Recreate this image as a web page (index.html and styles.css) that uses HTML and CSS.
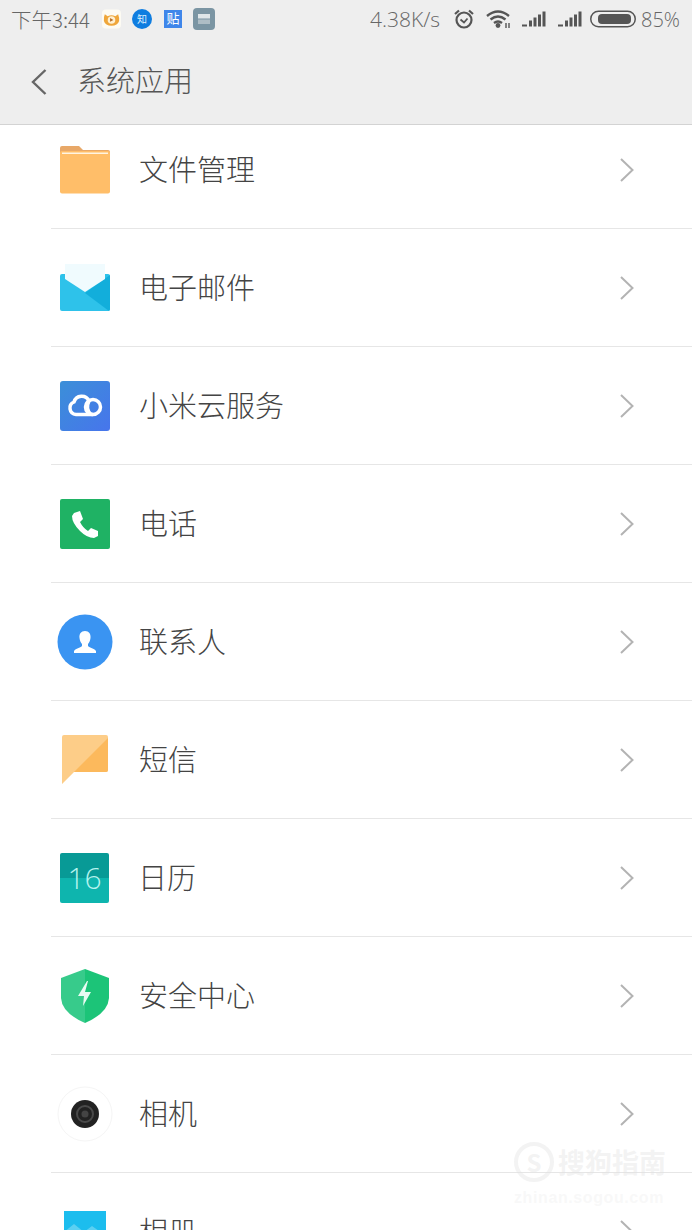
FILE: index.html
```html
<!DOCTYPE html>
<html lang="zh-CN">
<head>
    <meta charset="UTF-8">
    <title>系统应用</title>
    <link rel="stylesheet" href="styles.css">
</head>
<body>
    <header class="top">
        <div class="status">
            <div class="status-left">
                <span class="time">下午3:44</span>
                <svg class="note n-cat" viewBox="0 0 20 20"><rect width="20" height="20" rx="4" fill="#fdfbf3"/><path d="M3 5l3 2q4-2 8 0l3-2q1.500 4 1 7-1.500 5-8 5T2 12Q1.500 8 3 5z" fill="#efa63a"/><circle cx="10" cy="11" r="4" fill="#fff0d0"/><path d="M8.500 9l3.500 2-3.500 2z" fill="#b9702a"/></svg>
                <span class="note n-zhi">知</span>
                <span class="note n-tie">贴</span>
                <svg class="note n-book" viewBox="0 0 22 22"><rect width="22" height="22" rx="4" fill="#7b95a3"/><rect x="5" y="6" width="12" height="4.500" fill="#dfe6e9"/><rect x="5" y="11.500" width="12" height="4.500" fill="#aebdc5"/></svg>
            </div>
            <div class="status-right">
                <span class="speed">4.38K/s</span>
                <svg class="s-alarm" viewBox="0 0 22 22" fill="none" stroke="#555" stroke-width="2.200"><circle cx="11" cy="12" r="7.500"/><path d="M7.500 11.500l3.500 3 3.500-4" stroke-width="1.800"/><path d="M2 6l4-3.500M20 6l-4-3.500"/></svg>
                <svg class="s-wifi" viewBox="0 0 26 20" fill="none" stroke="#555" stroke-width="2.400"><path d="M1 7q11-9 22 0M4.500 10.500q7.500-6 15 0M8 14q4-3 8 0"/><circle cx="12" cy="16.500" r="2.400" fill="#555" stroke="none"/><path d="M20 14v5M23 14v5" stroke-width="1.400"/></svg>
                <svg class="s-signal" viewBox="0 0 24 16" fill="#555"><rect x="0" y="13.500" width="5" height="2"/><rect x="7" y="9.500" width="3" height="6"/><rect x="11.500" y="6.500" width="3" height="9"/><rect x="16" y="3.500" width="3" height="12"/><rect x="20.500" y="0.500" width="3" height="15"/></svg>
                <svg class="s-signal" viewBox="0 0 24 16" fill="#555"><rect x="0" y="13.500" width="5" height="2"/><rect x="7" y="9.500" width="3" height="6"/><rect x="11.500" y="6.500" width="3" height="9"/><rect x="16" y="3.500" width="3" height="12"/><rect x="20.500" y="0.500" width="3" height="15"/></svg>
                <svg class="s-batt" viewBox="0 0 46 18"><rect x=".75" y="1.250" width="44.500" height="15.500" rx="7.750" fill="none" stroke="#555" stroke-width="1.500"/><rect x="8" y="4" width="33" height="10" rx="4" fill="#555"/></svg>
                <span class="batt-text">85%</span>
            </div>
        </div>
        <div class="title-bar">
            <svg class="back" viewBox="0 0 18 28" fill="none" stroke="#666" stroke-width="2.400"><path d="M15.500 2L3 14l12.500 12"/></svg>
            <h1 class="title">系统应用</h1>
        </div>
    </header>

    <ul class="list">
        <li class="row">
            <svg class="icon" viewBox="0 0 60 60"><path d="M5 8q0-2 2-2h17l4 4h25q2 0 2 2v4H5z" fill="#e8a868"/><rect x="5" y="11" width="50" height="42.500" rx="2" fill="#ffbe69"/><rect x="7" y="12.500" width="46" height="1.500" fill="#fff4e2"/></svg>
            <span class="name">文件管理</span>
            <svg class="chev" viewBox="0 0 16 26" fill="none" stroke="#b3b3b3" stroke-width="2"><path d="M2 2l11.500 11L2 24"/></svg>
        </li>
        <li class="row">
            <svg class="icon" viewBox="0 0 60 60"><path d="M5 18q0-2 2-2h46q2 0 2 2v33q0 2-2 2H7q-2 0-2-2z" fill="#2ec2ea"/><path d="M55 17v34q0 1-1 2L30 35z" fill="#12aedb"/><path d="M10 6h40v15L30 34 10 21z" fill="#f0fbfe"/></svg>
            <span class="name">电子邮件</span>
            <svg class="chev" viewBox="0 0 16 26" fill="none" stroke="#b3b3b3" stroke-width="2"><path d="M2 2l11.500 11L2 24"/></svg>
        </li>
        <li class="row">
            <svg class="icon" viewBox="0 0 60 60"><defs><linearGradient id="cloud" x1="0" y1="0" x2="1" y2="1"><stop offset="0" stop-color="#3b8fd8"/><stop offset="1" stop-color="#4775ec"/></linearGradient></defs><rect x="5" y="5" width="50" height="50" rx="3" fill="url(#cloud)"/><g fill="none" stroke="#fff" stroke-width="3.500"><path d="M38 38.500H21A6.500 6.500 0 0 1 19 26A8 8 0 0 1 34 25Q30 33 36 38.500"/><circle cx="38" cy="31" r="7.500"/></g></svg>
            <span class="name">小米云服务</span>
            <svg class="chev" viewBox="0 0 16 26" fill="none" stroke="#b3b3b3" stroke-width="2"><path d="M2 2l11.500 11L2 24"/></svg>
        </li>
        <li class="row">
            <svg class="icon" viewBox="0 0 60 60"><rect x="5" y="5" width="50" height="50" rx="2" fill="#1fb264"/><path d="M19 19l6-2 3 8-3 3q3 6 8 9l3-3 7 3v5l-4 2q-7 0-14-7-8-8-8-15z" fill="#fff"/></svg>
            <span class="name">电话</span>
            <svg class="chev" viewBox="0 0 16 26" fill="none" stroke="#b3b3b3" stroke-width="2"><path d="M2 2l11.500 11L2 24"/></svg>
        </li>
        <li class="row">
            <svg class="icon" viewBox="0 0 60 60"><circle cx="30" cy="30" r="27.500" fill="#3a94f2"/><path d="M30 19c-4 0-6 3-5.500 7 .3 3 1.500 5 2.500 6v2c-2 2-6 2-8 5v2h22v-2c-2-3-6-3-8-5v-2c1-1 2.200-3 2.500-6 .5-4-1.500-7-5.500-7z" fill="#fff"/></svg>
            <span class="name">联系人</span>
            <svg class="chev" viewBox="0 0 16 26" fill="none" stroke="#b3b3b3" stroke-width="2"><path d="M2 2l11.500 11L2 24"/></svg>
        </li>
        <li class="row">
            <svg class="icon" viewBox="0 0 60 60"><path d="M9 5q-2 0-2 2v47l12-12h32q2 0 2-2V7q0-2-2-2z" fill="#fdcd88"/><path d="M53 8v32q0 2-2 2H19z" fill="#fcb95c"/></svg>
            <span class="name">短信</span>
            <svg class="chev" viewBox="0 0 16 26" fill="none" stroke="#b3b3b3" stroke-width="2"><path d="M2 2l11.500 11L2 24"/></svg>
        </li>
        <li class="row">
            <div class="cal">16</div>
            <span class="name">日历</span>
            <svg class="chev" viewBox="0 0 16 26" fill="none" stroke="#b3b3b3" stroke-width="2"><path d="M2 2l11.500 11L2 24"/></svg>
        </li>
        <li class="row">
            <svg class="icon" viewBox="0 0 60 60"><path d="M30 3L6 12v20q1 15 24 25z" fill="#37cb8b"/><path d="M30 3l24 9v20q-1 15-24 25z" fill="#1cc478"/><path d="M32 15l-9 15h6l-1 10 8-14h-6l3-11z" fill="#e9fbf3"/></svg>
            <span class="name">安全中心</span>
            <svg class="chev" viewBox="0 0 16 26" fill="none" stroke="#b3b3b3" stroke-width="2"><path d="M2 2l11.500 11L2 24"/></svg>
        </li>
        <li class="row">
            <svg class="icon" viewBox="0 0 60 60"><circle cx="30" cy="30" r="27" fill="#fff" stroke="#f5f5f5"/><circle cx="30" cy="30" r="14" fill="#222"/><circle cx="30" cy="30" r="8" fill="none" stroke="#4a4a4a" stroke-width="2"/><circle cx="30" cy="30" r="3.500" fill="#444"/></svg>
            <span class="name">相机</span>
            <svg class="chev" viewBox="0 0 16 26" fill="none" stroke="#b3b3b3" stroke-width="2"><path d="M2 2l11.500 11L2 24"/></svg>
        </li>
        <li class="row">
            <svg class="icon" viewBox="0 0 60 60"><rect x="9" y="9" width="42" height="42" fill="#1cbdee"/><path d="M9 30l10-8 10 8 8-6 14 10v17H9z" fill="#5bd0f2"/></svg>
            <span class="name">相册</span>
            <svg class="chev" viewBox="0 0 16 26" fill="none" stroke="#b3b3b3" stroke-width="2"><path d="M2 2l11.500 11L2 24"/></svg>
        </li>
    </ul>

    <div class="mark">
        <div class="mark-top"><span class="mark-logo">S</span><span class="mark-name">搜狗指南</span></div>
        <div class="mark-url">zhinan.sogou.com</div>
    </div>
</body>
</html>
```

FILE: styles.css
```css
* { margin: 0; padding: 0; box-sizing: border-box; }
html, body { height: 1230px; overflow: hidden; }
body {
    position: relative;
    background: #fff;
    font-family: "Noto Sans CJK SC", "Noto Sans", sans-serif;
    color: #444;
}

/* top */
.top {
    position: relative;
    z-index: 2;
    height: 125px;
    background: #eee;
    border-bottom: 1px solid #d3d3d3;
}
.status {
    height: 38px;
    padding: 0 12px;
    display: flex;
    justify-content: space-between;
    align-items: center;
    color: #666;
    font-size: 20px;
}
.status-left, .status-right { display: flex; align-items: center; }
.time { width: 88px; margin-left: -1px; font-size: 20.500px; font-weight: 300; white-space: nowrap; }
.note { display: block; flex: none; }
.n-cat { width: 19px; height: 20px; margin-left: 3px; margin-right: 11px; }
.n-zhi {
    width: 20px;
    height: 20px;
    margin-right: 12px;
    border-radius: 50%;
    background: #0f7de0;
    color: #dcefff;
    font-size: 10px;
    line-height: 20px;
    text-align: center;
}
.n-tie {
    width: 18px;
    height: 18px;
    margin-right: 11px;
    background: #3f86ea;
    color: #fff;
    font-size: 13px;
    line-height: 16px;
    text-align: center;
}
.n-book { width: 22px; height: 22px; }
.status-right { font-weight: 300; }
.speed { font-family: "Open Sans", sans-serif; font-size: 21px; font-weight: 300; width: 83px; white-space: nowrap; color: #666; }
.s-alarm { width: 22px; height: 22px; margin-right: 11px; }
.s-wifi { width: 26px; height: 20px; margin-right: 10px; }
.s-signal { width: 24px; height: 16px; margin-right: 12px; }
.s-signal + .s-signal { margin-right: 8px; }
.s-batt { width: 46px; height: 18px; margin-right: 5px; }
.batt-text { font-family: "Open Sans", sans-serif; font-weight: 300; }

.title-bar {
    height: 86px;
    padding-left: 30px;
    display: flex;
    align-items: center;
}
.back { width: 18px; height: 28px; margin-top: 1px; }
.title {
    margin-left: 29px;
    margin-bottom: 4px;
    font-size: 29px;
    font-weight: 300;
    color: #555;
}

/* rows */
.list { list-style: none; margin-top: -14px; padding-left: 51px; }
.row {
    position: relative;
    height: 118px;
    display: flex;
    align-items: center;
    border-bottom: 1px solid #e6e6e6;
}
.icon { display: block; flex: none; width: 60px; height: 60px; margin-left: 4px; }
.cal {
    flex: none;
    width: 49px;
    height: 50px;
    margin: 0 5px 0 9px;
    border-radius: 2px;
    background: linear-gradient(#089a96 0 50%, #0eb5ae 50%);
    color: #b5f3ee;
    font-family: "Open Sans", sans-serif;
    font-weight: 300;
    font-size: 30px;
    line-height: 50px;
    text-align: center;
}
.name {
    margin-left: 24px;
    margin-bottom: 4px;
    font-size: 29px;
    font-weight: 300;
    color: #444;
    white-space: nowrap;
}
.chev {
    position: absolute;
    left: 568px;
    top: 46px;
    width: 16px;
    height: 26px;
}

/* watermark */
.mark {
    position: absolute;
    z-index: 3;
    left: 514px;
    top: 1142px;
    color: rgba(225, 225, 225, .4);
}
.mark-top { display: flex; align-items: center; }
.mark-logo {
    width: 40px;
    height: 40px;
    border: 4px solid rgba(225, 225, 225, .4);
    border-radius: 50%;
    font-size: 24px;
    font-weight: 700;
    line-height: 32px;
    text-align: center;
}
.mark-name { margin-left: 4px; font-size: 27px; font-weight: 700; line-height: 40px; white-space: nowrap; }
.mark-url {
    margin-top: 7px;
    font-family: "Liberation Sans", sans-serif;
    font-size: 16px;
    font-weight: 700;
    letter-spacing: .6px;
    white-space: nowrap;
    color: rgba(235, 235, 235, .35);
}
```
